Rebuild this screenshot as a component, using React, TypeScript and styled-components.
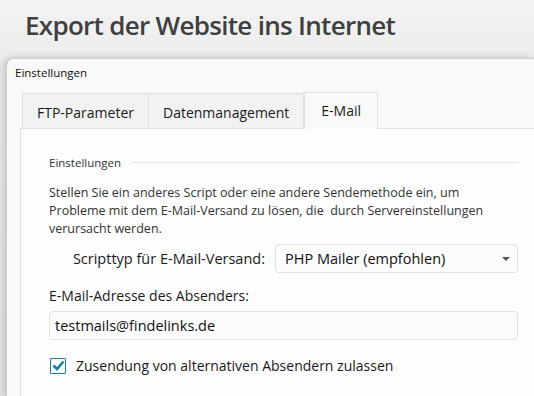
import { createGlobalStyle } from 'styled-components'
import styled from 'styled-components'

const GlobalStyle = createGlobalStyle`
  html, body {
    margin: 0;
    padding: 0;
    width: 534px;
    height: 396px;
    overflow: hidden;
    background: #f2f2f2;
    font-family: 'Open Sans', 'Noto Sans', sans-serif;
    color: #222;
  }
`

const Page = styled.div`
  width: 534px;
  height: 396px;
  display: flex;
  flex-direction: column;
  background: linear-gradient(#f3f3f3, #ececec 60px, #e4e4e4);
`

const Title = styled.h1`
  margin: 0;
  padding: 7px 0 0 25px;
  height: 58px;
  box-sizing: border-box;
  font-size: 26px;
  font-weight: 600;
  color: #3f3f3f;
  letter-spacing: -0.7px;
`

const Window = styled.div`
  margin-left: 6px;
  flex: 1;
  background: #f9f9f9;
  border: 1px solid #cfcfcf;
  border-right: none;
  border-bottom: none;
  border-top-left-radius: 8px;
  box-shadow: -3px 0 6px rgba(0, 0, 0, 0.12), 0 -2px 8px rgba(0, 0, 0, 0.06);
  display: flex;
  flex-direction: column;
  padding: 6px 0 0 14px;
`

const WindowTitle = styled.div`
  font-size: 11.5px;
  color: #111;
  height: 27px;
  margin-left: -6px;
`

const TabBar = styled.div`
  display: flex;
  align-items: flex-end;
  padding-left: 1px;
`

const Tab = styled.div<{ active?: boolean }>`
  height: ${({ active }) => (active ? 37 : 35)}px;
  box-sizing: border-box;
  padding: 0 ${({ active }) => (active ? 16 : 14)}px;
  display: flex;
  align-items: center;
  padding-top: ${({ active }) => (active ? 0 : 2)}px;
  font-size: 14px;
  color: #1a1a1a;
  background: ${({ active }) => (active ? '#f9f9f9' : '#f2f2f2')};
  border: 1px solid #dedede;
  border-bottom: ${({ active }) => (active ? '1px solid #f9f9f9' : 'none')};
  border-left: ${({ active }) => (active ? '1px solid #dedede' : 'none')};
  margin-bottom: ${({ active }) => (active ? -1 : 0)}px;
  position: relative;
  &:first-child {
    border-left: 1px solid #dedede;
  }
`

const Panel = styled.div`
  flex: 1;
  background: #fdfdfd;
  border-left: 1px solid #dedede;
  border-top: 1px solid #e2e2e2;
  margin-left: -1px;
  padding: 26px 16px 0 28px;
`

const GroupHead = styled.div`
  display: flex;
  align-items: center;
  gap: 10px;
  font-size: 11.5px;
  color: #333;
  &::after {
    content: '';
    flex: 1;
    height: 1px;
    background: #e4e4e4;
  }
`

const Text = styled.p`
  margin: 14px 0 0;
  font-size: 12.5px;
  line-height: 18px;
  color: #333;
`

const Row = styled.div`
  display: flex;
  align-items: center;
  margin-top: 6px;
  gap: 10px;
`

const RowLabel = styled.label`
  width: 216px;
  text-align: right;
  font-size: 14.5px;
  color: #1a1a1a;
`

const Select = styled.div`
  flex: 1;
  height: 29px;
  box-sizing: border-box;
  border: 1px solid #e0e0e0;
  border-radius: 4px;
  background: #fcfcfc;
  display: flex;
  align-items: center;
  justify-content: space-between;
  padding: 0 7px 0 9px;
  font-size: 14.5px;
  color: #111;
`

const Caret = styled.span`
  width: 0;
  height: 0;
  border-left: 4px solid transparent;
  border-right: 4px solid transparent;
  border-top: 4px solid #555;
`

const FieldLabel = styled.div`
  margin-top: 13px;
  font-size: 14px;
  color: #1a1a1a;
`

const Input = styled.div`
  margin-top: 6px;
  height: 29px;
  box-sizing: border-box;
  border: 1px solid #e0e0e0;
  border-radius: 4px;
  background: #fcfcfc;
  display: flex;
  align-items: center;
  padding-left: 5px;
  font-size: 14.5px;
  color: #111;
`

const CheckRow = styled.label`
  margin-top: 16px;
  display: flex;
  align-items: center;
  gap: 10px;
  font-size: 14px;
  color: #1a1a1a;
`

const Box = styled.span`
  width: 16px;
  height: 16px;
  box-sizing: border-box;
  border: 1.5px solid #17809f;
  border-radius: 1px;
  display: flex;
  align-items: center;
  justify-content: center;
  margin-left: 1px;
`

export default function App() {
  return (
    <Page>
      <GlobalStyle />
      <Title>Export der Website ins Internet</Title>
      <Window>
        <WindowTitle>Einstellungen</WindowTitle>
        <TabBar>
          <Tab>FTP-Parameter</Tab>
          <Tab>Datenmanagement</Tab>
          <Tab active>E-Mail</Tab>
        </TabBar>
        <Panel>
          <GroupHead>Einstellungen</GroupHead>
          <Text>
            Stellen Sie ein anderes Script oder eine andere Sendemethode ein, um Probleme mit dem
            E-Mail-Versand zu lösen, die&nbsp; durch Servereinstellungen verursacht werden.
          </Text>
          <Row>
            <RowLabel>Scripttyp für E-Mail-Versand:</RowLabel>
            <Select>
              PHP Mailer (empfohlen)
              <Caret />
            </Select>
          </Row>
          <FieldLabel>E-Mail-Adresse des Absenders:</FieldLabel>
          <Input>testmails@findelinks.de</Input>
          <CheckRow>
            <Box>
              <svg width="13" height="11" viewBox="0 0 13 11">
                <path d="M1.5 5.5 L5 9 L11.5 1.5" fill="none" stroke="#17809f" strokeWidth="2.6" />
              </svg>
            </Box>
            Zusendung von alternativen Absendern zulassen
          </CheckRow>
        </Panel>
      </Window>
    </Page>
  )
}
